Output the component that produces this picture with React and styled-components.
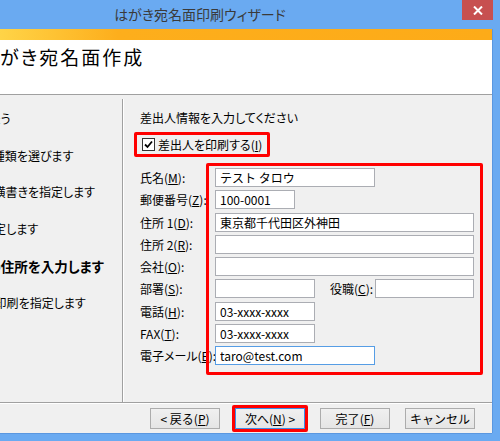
import React from "react";
import styled, { createGlobalStyle } from "styled-components";

const GlobalStyle = createGlobalStyle`
  html, body {
    margin: 0;
    padding: 0;
    overflow: hidden;
  }
  body {
    background: #6aaaf1;
    font-family: "Noto Sans CJK JP", "Liberation Sans", sans-serif;
    font-size: 12px;
    color: #000;
    font-feature-settings: "palt";
  }
`;

const Window = styled.div`
  width: 600px;
  height: 441px;
  margin-left: -100px;
  display: flex;
  flex-direction: column;
  background: #6aaaf1;
`;

const TitleBar = styled.div`
  height: 29px;
  display: grid;
  grid-template-columns: 1fr auto 1fr;
  align-items: start;
`;

const Title = styled.div`
  grid-column: 2;
  font-size: 14px;
  line-height: 28px;
  color: #3a3a3a;
`;

const CloseButton = styled.div`
  grid-column: 3;
  justify-self: end;
  width: 31px;
  height: 20px;
  margin-right: 7px;
  background: #c75050;
  display: flex;
  align-items: center;
  justify-content: center;
`;

const Client = styled.div`
  flex: 1;
  margin: 0 8px 8px 8px;
  background: #f0f0f0;
  display: flex;
  flex-direction: column;
  box-shadow: 1px 0 0 #5a97e0, 0 1px 0 #5a97e0;
`;

const AccentBand = styled.div`
  height: 11px;
  background: linear-gradient(to right, #ffe066 0, #ffd447 92px, #fdae1c 210px, #fdab18 100%);
`;

const Header = styled.div`
  height: 54px;
  background: #fff;
  border-bottom: 1px solid #a0a0a0;
`;

const HeaderTitle = styled.div`
  padding: 3px 0 0 71px;
  font-size: 19px;
  line-height: 28px;
  letter-spacing: 2px;
`;

const Main = styled.div`
  height: 307px;
  display: flex;
`;

const StepList = styled.div`
  width: 214px;
  padding: 5px 0 0 39px;
  box-sizing: border-box;
`;

const Step = styled.div`
  height: 36.8px;
  display: flex;
  align-items: center;
  white-space: nowrap;
  font-size: ${(p) => (p.$current ? "13.5px" : "12px")};
  font-weight: ${(p) => (p.$current ? 700 : 400)};
`;

const VSeparator = styled.div`
  width: 1px;
  margin-top: 4px;
  background: #a0a0a0;
  box-shadow: 1px 0 0 #fff;
`;

const RightPane = styled.div`
  flex: 1;
  padding: 15px 0 0 17px;
  display: flex;
  flex-direction: column;
  align-items: flex-start;
`;

const Intro = styled.div`
  line-height: 16px;
`;

const Highlight = styled.div`
  border: 3px solid #ff0000;
  border-radius: 2px;
  box-sizing: border-box;
`;

const CheckFrame = styled(Highlight)`
  height: 25px;
  margin: 6px 0 0 -6px;
  padding: 0 5px 0 5px;
  display: flex;
  align-items: center;
  gap: 3px;
`;

const CheckBox = styled.span`
  width: 13px;
  height: 13px;
  box-sizing: border-box;
  border: 1px solid #333;
  background: #fff;
  display: flex;
  align-items: center;
  justify-content: center;
`;

const Form = styled.div`
  display: flex;
  margin-top: 6px;
`;

const LabelColumn = styled.div`
  width: 66px;
  padding-top: 5px;
  display: flex;
  flex-direction: column;
  gap: 3.25px;
`;

const Label = styled.div`
  height: 19px;
  line-height: 19px;
  white-space: nowrap;
`;

const FieldFrame = styled(Highlight)`
  width: 277px;
  padding: 2px 6px 7px 6px;
  display: flex;
  flex-direction: column;
  gap: 3.25px;
`;

const FieldRow = styled.div`
  height: 19px;
  display: flex;
  align-items: center;
`;

const TextBox = styled.input`
  width: ${(p) => p.$w}px;
  height: 19px;
  box-sizing: border-box;
  margin: 0;
  padding: 0 4px;
  border: 1px solid ${(p) => (p.$focused ? "#569de5" : "#abadb3")};
  background: #fff;
  font-family: inherit;
  font-size: 12px;
  color: #000;
  outline: none;
  margin-left: ${(p) => (p.$push ? "auto" : "0")};
`;

const InlineLabel = styled.span`
  margin-left: 15px;
  white-space: nowrap;
`;

const HLine = styled.div`
  border-top: 1px solid #a0a0a0;
  border-bottom: 1px solid #fff;
`;

const Footer = styled.div`
  flex: 1;
  display: flex;
  justify-content: flex-end;
  align-items: flex-start;
  gap: 15px;
  padding: 4px 17px 0 0;
`;

const Button = styled.button`
  width: 70px;
  height: 21px;
  margin: 0;
  padding: 0;
  box-sizing: border-box;
  border: 1px solid ${(p) => (p.$default ? "#3c8ee6" : "#acacac")};
  background: linear-gradient(#f0f0f0, #e5e5e5);
  font-family: inherit;
  font-size: 12px;
  color: #000;
`;

const ButtonFrame = styled(Highlight)`
  margin: -3px;
  display: flex;
`;

const Mnemonic = ({ k }) => (
  <>
    (<u>{k}</u>)
  </>
);

const steps = [
  "始めましょう",
  "はがきの種類を選びます",
  "縦書き／横書きを指定します",
  "書式を指定します",
  "差出人の住所を入力します",
  "差出人の印刷を指定します",
];

const fields = [
  { label: "氏名", key: "M", w: 160, value: "テスト タロウ" },
  { label: "郵便番号", key: "Z", w: 80, value: "100-0001" },
  { label: "住所 1", key: "D", w: 260, value: "東京都千代田区外神田" },
  { label: "住所 2", key: "R", w: 260, value: "" },
  { label: "会社", key: "O", w: 260, value: "" },
  { label: "部署", key: "S", w: 100, value: "", extra: true },
  { label: "電話", key: "H", w: 100, value: "03-xxxx-xxxx" },
  { label: "FAX", key: "T", w: 100, value: "03-xxxx-xxxx" },
  { label: "電子メール", key: "E", w: 160, value: "taro@test.com", focused: true },
];

export default function App() {
  return (
    <>
      <GlobalStyle />
      <Window>
        <TitleBar>
          <Title>はがき宛名面印刷ウィザード</Title>
          <CloseButton>
            <svg width="10" height="9" viewBox="0 0 10 9">
              <path d="M1 0.5 L9 8.5 M9 0.5 L1 8.5" stroke="#fff" strokeWidth="2" />
            </svg>
          </CloseButton>
        </TitleBar>
        <Client>
          <AccentBand />
          <Header>
            <HeaderTitle>はがき宛名面作成</HeaderTitle>
          </Header>
          <Main>
            <StepList>
              {steps.map((s, i) => (
                <Step key={s} $current={i === 4}>
                  {s}
                </Step>
              ))}
            </StepList>
            <VSeparator />
            <RightPane>
              <Intro>差出人情報を入力してください</Intro>
              <CheckFrame>
                <CheckBox>
                  <svg width="9" height="9" viewBox="0 0 9 9">
                    <path d="M1 4.5 L3.5 7 L8 1.5" fill="none" stroke="#000" strokeWidth="1.8" />
                  </svg>
                </CheckBox>
                <span>
                  差出人を印刷する<Mnemonic k="I" />
                </span>
              </CheckFrame>
              <Form>
                <LabelColumn>
                  {fields.map((f) => (
                    <Label key={f.key}>
                      {f.label}
                      <Mnemonic k={f.key} />:
                    </Label>
                  ))}
                </LabelColumn>
                <FieldFrame>
                  {fields.map((f) => (
                    <FieldRow key={f.key}>
                      <TextBox $w={f.w} $focused={f.focused} defaultValue={f.value} readOnly />
                      {f.extra && (
                        <>
                          <InlineLabel>
                            役職<Mnemonic k="C" />:
                          </InlineLabel>
                          <TextBox $w={99} $push defaultValue="" readOnly />
                        </>
                      )}
                    </FieldRow>
                  ))}
                </FieldFrame>
              </Form>
            </RightPane>
          </Main>
          <HLine />
          <Footer>
            <Button>&lt; 戻る<Mnemonic k="P" /></Button>
            <ButtonFrame>
              <Button $default>
                次へ<Mnemonic k="N" /> &gt;
              </Button>
            </ButtonFrame>
            <Button>完了<Mnemonic k="F" /></Button>
            <Button>キャンセル</Button>
          </Footer>
        </Client>
      </Window>
    </>
  );
}
